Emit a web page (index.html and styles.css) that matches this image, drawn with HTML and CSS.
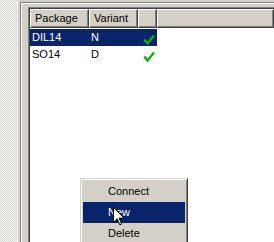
FILE: index.html
```html
<!DOCTYPE html>
<html>
<head>
<meta charset="utf-8">
<link rel="stylesheet" href="styles.css">
</head>
<body>
<div class="screen">
  <div class="dither"></div>
  <div class="pane">
    <div class="etch">
      <div class="listview">
        <div class="header">
          <div class="hcell c1">Package</div>
          <div class="hcell c2">Variant</div>
          <div class="hcell c3"></div>
          <div class="hcell filler"></div>
        </div>
        <div class="row selected">
          <span class="cell c1 first">DIL14</span>
          <span class="cell c2">N</span>
          <span class="cell c3"><svg class="check" width="12" height="11" viewBox="0 0 12 11"><path d="M1.3 5.6 L4.6 9.4 L11 1.4" fill="none" stroke="#10b010" stroke-width="2.4"/></svg></span>
        </div>
        <div class="row">
          <span class="cell c1 first">SO14</span>
          <span class="cell c2">D</span>
          <span class="cell c3"><svg class="check" width="12" height="11" viewBox="0 0 12 11"><path d="M1.3 5.6 L4.6 9.4 L11 1.4" fill="none" stroke="#10b010" stroke-width="2.4"/></svg></span>
        </div>
      </div>
    </div>
  </div>
  <div class="menu">
    <div class="mitem">Connect</div>
    <div class="mitem active">New</div>
    <div class="mitem">Delete</div>
  </div>
  <svg class="cursor" width="12" height="19" viewBox="0 0 12 19"><path d="M0.5 0.5 L0.5 15.5 L4.2 11.8 L6.8 17.8 L8.6 17 L6.1 11.1 L11 11.1 Z" fill="#fff" stroke="#000" stroke-width="1"/></svg>
</div>
</body>
</html>
```
FILE: styles.css
```css
html, body {
  margin: 0;
  padding: 0;
}
body {
  width: 274px;
  height: 242px;
  overflow: hidden;
  background: #d4d0c8;
  font-family: "Liberation Sans", Arial, sans-serif;
  font-size: 11px;
  color: #000;
}
.screen {
  position: relative;
  display: flex;
  width: 274px;
  height: 242px;
  overflow: hidden;
}
.dither {
  width: 17px;
  flex: none;
  background-image: conic-gradient(#ffffff 25%, #d4d0c8 0 50%, #ffffff 0 75%, #d4d0c8 0);
  background-size: 2px 2px;
}
.pane {
  flex: 1;
  display: flex;
  border-left: 1px solid #fff;
  padding: 2px 0 0 2px;
  background: #d4d0c8;
}
.etch {
  flex: 1;
  display: flex;
  border-top: 1px solid #808080;
  border-left: 1px solid #808080;
  box-shadow: inset 1px 1px 0 #fff;
  padding: 4px 0 0 7px;
}
.listview {
  flex: 1;
  background: #fff;
  border-top: 1px solid #808080;
  border-left: 1px solid #808080;
  padding: 1px 0 0 1px;
  box-shadow: inset 1px 1px 0 #404040;
}
.header {
  display: flex;
  height: 19px;
}
.hcell {
  box-sizing: border-box;
  height: 19px;
  line-height: 17px;
  border-top: 1px solid #fff;
  border-left: 1px solid #fff;
  border-right: 1px solid #404040;
  border-bottom: 1px solid #404040;
  box-shadow: inset -1px -1px 0 #808080;
  background: #d4d0c8;
  padding-left: 4px;
  white-space: nowrap;
}
.c1 { width: 59px; flex: none; box-sizing: border-box; }
.c2 { width: 49px; flex: none; box-sizing: border-box; }
.c3 { width: 19px; flex: none; box-sizing: border-box; }
.filler { flex: 1; }
.row {
  display: flex;
  width: 127px;
  height: 17px;
  line-height: 17px;
  margin-top: 1px;
  margin-bottom: -1px;
}
.row.selected {
  background: #0a246a;
  color: #fff;
}
.cell {
  display: block;
  padding-left: 2px;
  white-space: nowrap;
}
.cell.c3 {
  position: relative;
}
.check {
  display: block;
  margin: 5px 0 0 3px;
}
.menu {
  position: absolute;
  left: 80px;
  top: 178px;
  width: 108px;
  box-sizing: border-box;
  background: #d4d0c8;
  border-top: 1px solid #d4d0c8;
  border-left: 1px solid #d4d0c8;
  border-right: 1px solid #404040;
  border-bottom: 1px solid #404040;
  box-shadow: inset 1px 1px 0 #fff, inset -1px -1px 0 #808080;
  padding: 2px;
}
.mitem {
  height: 21px;
  line-height: 21px;
  padding-left: 25px;
  white-space: nowrap;
}
.mitem.active {
  background: #0a246a;
  color: #fff;
}
.cursor {
  position: absolute;
  left: 113px;
  top: 207px;
}
```
